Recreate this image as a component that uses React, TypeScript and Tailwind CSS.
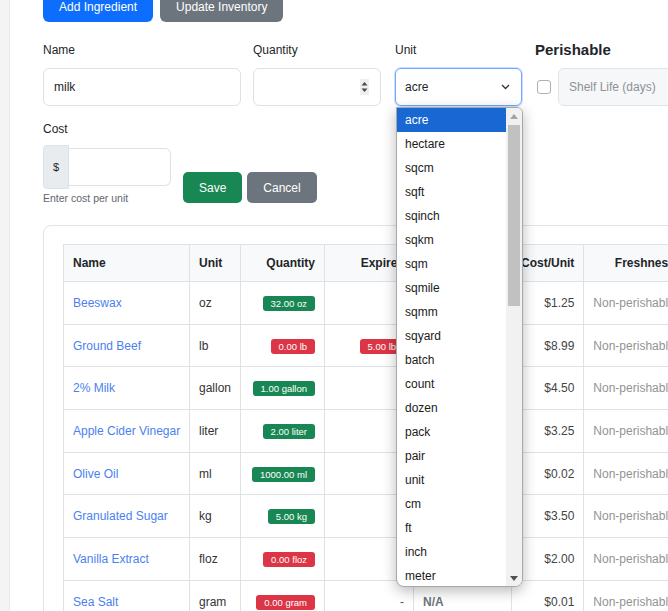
import React from 'react'

type Row = {
  name: string;
  unit: string;
  qty: string;
  low: boolean;
  expires?: string;
  dash?: boolean;
  cost: string;
};

const rows: Row[] = [
  { name: "Beeswax", unit: "oz", qty: "32.00 oz", low: false, cost: "$1.25" },
  { name: "Ground Beef", unit: "lb", qty: "0.00 lb", low: true, expires: "5.00 lb", cost: "$8.99" },
  { name: "2% Milk", unit: "gallon", qty: "1.00 gallon", low: false, cost: "$4.50" },
  { name: "Apple Cider Vinegar", unit: "liter", qty: "2.00 liter", low: false, cost: "$3.25" },
  { name: "Olive Oil", unit: "ml", qty: "1000.00 ml", low: false, cost: "$0.02" },
  { name: "Granulated Sugar", unit: "kg", qty: "5.00 kg", low: false, cost: "$3.50" },
  { name: "Vanilla Extract", unit: "floz", qty: "0.00 floz", low: true, cost: "$2.00" },
  { name: "Sea Salt", unit: "gram", qty: "0.00 gram", low: true, dash: true, cost: "$0.01" },
];

const units = [
  "acre", "hectare", "sqcm", "sqft", "sqinch", "sqkm", "sqm", "sqmile", "sqmm", "sqyard",
  "batch", "count", "dozen", "pack", "pair", "unit", "cm", "ft", "inch", "meter",
];

const Badge = ({ text, red }: { text: string; red: boolean }) => (
  <span
    className={
      red
        ? "inline-block h-[15px] rounded-[3px] bg-[#dc3545] px-[8px] text-[9.5px] leading-[15px] text-white"
        : "inline-block h-[15px] rounded-[3px] bg-[#198754] px-[8px] text-[9.5px] leading-[15px] text-white"
    }
  >
    {text}
  </span>
)

const UnitDropdown = () => (
  <div className="absolute left-[1px] top-[39px] z-20 flex h-[480px] w-[127px] overflow-hidden rounded-b-[8px] rounded-tr-[6px] border border-[#a8a8a8] bg-white shadow-[0_4px_14px_rgba(0,0,0,0.28)]">
    <ul className="flex-1">
      {units.map((u, i) => (
        <li
          key={u}
          className={
            i === 0
              ? "h-[24px] bg-[#1967d2] pl-[8px] text-[12px] leading-[24px] text-white"
              : "h-[24px] pl-[8px] text-[12px] leading-[24px] text-[#1b1b1b]"
          }
        >
          {u}
        </li>
      ))}
    </ul>
    <div className="flex w-[16px] flex-col items-center bg-[#f1f1f1]">
      <div className="flex h-[16px] items-center justify-center">
        <svg width="8" height="5" viewBox="0 0 8 5">
          <path d="M0 5 L4 0 L8 5 Z" fill="#a3a3a3" />
        </svg>
      </div>
      <div className="mt-[1px] h-[181px] w-[12px] bg-[#c1c1c1]" />
      <div className="flex-1" />
      <div className="flex h-[16px] items-center justify-center">
        <svg width="8" height="5" viewBox="0 0 8 5">
          <path d="M0 0 L8 0 L4 5 Z" fill="#505050" />
        </svg>
      </div>
    </div>
  </div>
)

const App = () => {
  return (
    <div className="flex h-[611px] overflow-hidden bg-white font-['Liberation_Sans',Arial,sans-serif] text-[#212529]">
      <div className="w-[10px] shrink-0 border-r border-[#e8e8e8] bg-[#f4f4f4]" />
      <div className="min-w-0 flex-1 overflow-hidden pl-[33px]">
        <div className="-mt-[9px] flex gap-[7px]">
          <button className="h-[31px] rounded-[6px] bg-[#0d6efd] px-[16px] text-[12px] text-white">
            Add Ingredient
          </button>
          <button className="h-[31px] rounded-[6px] bg-[#6c757d] px-[16px] text-[12px] text-white">
            Update Inventory
          </button>
        </div>

        <div className="mt-[19px] flex w-[800px]">
          <div className="w-[198px] shrink-0">
            <div className="h-[18px] text-[12px] leading-[18px]">Name</div>
            <div className="mt-[9px] flex h-[38px] items-center rounded-[6px] border border-[#dee2e6] px-[10px] text-[12px]">
              milk
            </div>
          </div>
          <div className="ml-[12px] w-[128px] shrink-0">
            <div className="h-[18px] text-[12px] leading-[18px]">Quantity</div>
            <div className="mt-[9px] flex h-[38px] items-center justify-end rounded-[6px] border border-[#dee2e6] pr-[11px]">
              <svg width="9" height="16" viewBox="0 0 9 16">
                <rect width="9" height="16" fill="#efefef" />
                <path d="M1.5 6.5 L4.5 3 L7.5 6.5 Z" fill="#4a4a4a" />
                <path d="M1.5 9.5 L7.5 9.5 L4.5 13 Z" fill="#4a4a4a" />
              </svg>
            </div>
          </div>
          <div className="ml-[14px] w-[127px] shrink-0">
            <div className="h-[18px] text-[12px] leading-[18px]">Unit</div>
            <div className="relative mt-[9px]">
              <div className="flex h-[38px] items-center justify-between rounded-[6px] border border-[#6ea8fe] pl-[9px] pr-[11px] text-[12px] shadow-[0_0_0_1px_rgba(110,168,254,0.35)]">
                <span>acre</span>
                <svg width="9" height="6" viewBox="0 0 9 6">
                  <path d="M1 1 L4.5 4.5 L8 1" fill="none" stroke="#333" strokeWidth="1.3" />
                </svg>
              </div>
              <UnitDropdown />
            </div>
          </div>
          <div className="ml-[13px] shrink-0">
            <div className="h-[18px] text-[15px] font-bold leading-[18px]">Perishable</div>
            <div className="mt-[9px] flex items-center">
              <div className="ml-[2px] h-[14px] w-[14px] rounded-[3px] border border-[#b0b0b0] bg-white" />
              <div className="ml-[7px] flex h-[38px] w-[200px] items-center rounded-[6px] border border-[#e1e4e8] bg-[#f6f7f9] pl-[10px] text-[12px] text-[#8d9297]">
                Shelf Life (days)
              </div>
            </div>
          </div>
        </div>

        <div className="mt-[14px] flex items-end">
          <div>
            <div className="h-[18px] text-[12px] leading-[18px]">Cost</div>
            <div className="mt-[7px] flex w-[128px] items-center">
              <div className="flex h-[44px] w-[26px] items-center justify-center rounded-l-[4px] border border-[#dee2e6] bg-[#e9ecef] text-[11px]">
                $
              </div>
              <div className="h-[38px] flex-1 rounded-r-[6px] border border-l-0 border-[#dee2e6]" />
            </div>
            <div className="mt-[2px] text-[10.5px] leading-[14px] text-[#5f6670]">Enter cost per unit</div>
          </div>
          <div className="mb-[2px] ml-[12px] flex gap-[5px]">
            <button className="h-[31px] rounded-[5px] bg-[#198754] px-[16px] text-[12px] text-white">Save</button>
            <button className="h-[31px] rounded-[5px] bg-[#6c757d] px-[16px] text-[12px] text-white">Cancel</button>
          </div>
        </div>

        <div className="mt-[20px] w-[690px] rounded-[8px] border border-[#e3e3e3] pl-[19px] pt-[18px]">
          <table className="table-fixed border-collapse whitespace-nowrap text-[12px]">
            <colgroup>
              <col className="w-[126px]" />
              <col className="w-[51px]" />
              <col className="w-[84px]" />
              <col className="w-[89px]" />
              <col className="w-[98px]" />
              <col className="w-[72px]" />
              <col className="w-[122px]" />
            </colgroup>
            <thead>
              <tr className="bg-[#f8f9fa]">
                <th className="h-[37px] border border-[#dee2e6] px-[9px] text-left font-bold">Name</th>
                <th className="h-[37px] border border-[#dee2e6] px-[9px] text-left font-bold">Unit</th>
                <th className="h-[37px] border border-[#dee2e6] px-[9px] text-right font-bold">Quantity</th>
                <th className="h-[37px] border border-[#dee2e6] px-[9px] text-right font-bold">Expires</th>
                <th className="h-[37px] border border-[#dee2e6] px-[9px] text-left font-bold">Expiration</th>
                <th className="h-[37px] border border-[#dee2e6] px-[9px] text-right font-bold">Cost/Unit</th>
                <th className="h-[37px] border border-[#dee2e6] px-[9px] text-center font-bold">Freshness</th>
              </tr>
            </thead>
            <tbody>
              {rows.map((r) => (
                <tr key={r.name}>
                  <td className="h-[42.7px] overflow-hidden border border-[#dee2e6] pl-[9px] pr-0 text-[#4c7ff0]">{r.name}</td>
                  <td className="h-[42.7px] border border-[#dee2e6] px-[9px] text-[#333]">{r.unit}</td>
                  <td className="h-[42.7px] border border-[#dee2e6] px-[9px] text-right">
                    <Badge text={r.qty} red={r.low} />
                  </td>
                  <td className="h-[42.7px] border border-[#dee2e6] px-[9px] text-right text-[#555]">
                    {r.expires ? <Badge text={r.expires} red /> : r.dash ? "-" : ""}
                  </td>
                  <td className="h-[42.7px] border border-[#dee2e6] px-[9px] font-bold text-[#6c757d]">
                    {r.dash ? "N/A" : ""}
                  </td>
                  <td className="h-[42.7px] border border-[#dee2e6] px-[9px] text-right text-[#444]">{r.cost}</td>
                  <td className="h-[42.7px] overflow-hidden border border-[#dee2e6] px-[9px] text-[#939393]">Non-perishable</td>
                </tr>
              ))}
            </tbody>
          </table>
        </div>
      </div>
    </div>
  )
}

export default App
